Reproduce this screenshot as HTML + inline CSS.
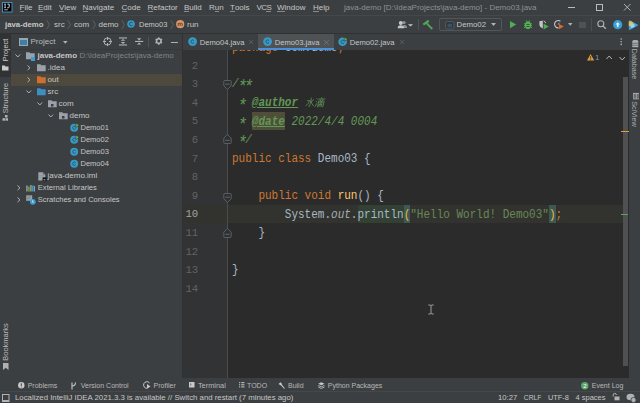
<!DOCTYPE html>
<html><head><meta charset="utf-8">
<style>
*{margin:0;padding:0;box-sizing:border-box}
html,body{width:640px;height:403px;overflow:hidden;background:#3C3F41}
body{position:relative;font-family:"Liberation Sans",sans-serif;color:#C6C6C6;font-size:8px}
.a{position:absolute;white-space:nowrap}
.t{position:absolute;white-space:nowrap;line-height:10px}
.mono{font-family:"Liberation Mono",monospace}
u{text-decoration:none;border-bottom:1px solid rgba(200,200,200,0.55);display:inline-block;line-height:7.4px}
svg{position:absolute;overflow:visible}
</style></head><body>

<!-- MENU BAR -->
<div class="a" style="left:0;top:0;width:640px;height:15px;background:#3C3F41"></div>
<div class="a" style="left:0;top:15px;width:640px;height:1px;background:#45484A"></div>
<!-- logo -->
<svg style="left:2px;top:2px" width="11" height="11"><rect x="0.5" y="0.5" width="9.5" height="9.5" fill="#000" stroke="#3D8FC6" stroke-width="1"/><path d="M2.3 2.1H3.9M3.1 2.1V5.7M2.3 5.7H3.9" stroke="#D8D8D8" stroke-width="0.9"/><path d="M5.4 2.1H7.2V4.9Q7.2 5.8 6.3 5.8H5.2" stroke="#D8D8D8" stroke-width="1" fill="none"/><rect x="2.2" y="7.3" width="3.6" height="1" fill="#BDB6A8"/></svg>
<div class="t" style="left:19.5px;top:3px"><u>F</u>ile</div>
<div class="t" style="left:38px;top:3px"><u>E</u>dit</div>
<div class="t" style="left:59px;top:3px"><u>V</u>iew</div>
<div class="t" style="left:82.5px;top:3px"><u>N</u>avigate</div>
<div class="t" style="left:121.5px;top:3px"><u>C</u>ode</div>
<div class="t" style="left:147.5px;top:3px"><u>R</u>efactor</div>
<div class="t" style="left:184px;top:3px"><u>B</u>uild</div>
<div class="t" style="left:209px;top:3px">R<u>u</u>n</div>
<div class="t" style="left:230px;top:3px"><u>T</u>ools</div>
<div class="t" style="left:256.5px;top:3px;letter-spacing:-0.6px">VC<u>S</u></div>
<div class="t" style="left:277px;top:3px"><u>W</u>indow</div>
<div class="t" style="left:313px;top:3px"><u>H</u>elp</div>
<div class="t" style="left:344px;top:3px;color:#8E9193">java-demo [D:\IdeaProjects\java-demo] - Demo03.java</div>
<!-- window controls -->
<div class="a" style="left:567.5px;top:7px;width:7px;height:1px;background:#BBB"></div>
<div class="a" style="left:596px;top:4px;width:6.5px;height:6.5px;border:1px solid #BBB"></div>
<svg style="left:624px;top:4px" width="7" height="7"><path d="M0 0L6.5 6.5M6.5 0L0 6.5" stroke="#BBB" stroke-width="0.9"/></svg>

<!-- BREADCRUMB BAR -->
<div class="t" style="left:5px;top:19.5px;font-weight:bold;font-size:7.8px">java-demo</div>
<svg style="left:46.2px;top:20px" width="5" height="10"><path d="M0.8 0.4Q2.6 2.6 3.3 4.6Q2.6 6.6 0.8 8.8" stroke="#6A6D70" fill="none" stroke-width="0.75"/></svg>
<div class="t" style="left:54px;top:19.5px">src</div>
<svg style="left:66.6px;top:20px" width="5" height="10"><path d="M0.8 0.4Q2.6 2.6 3.3 4.6Q2.6 6.6 0.8 8.8" stroke="#6A6D70" fill="none" stroke-width="0.75"/></svg>
<div class="t" style="left:74px;top:19.5px">com</div>
<svg style="left:91.6px;top:20px" width="5" height="10"><path d="M0.8 0.4Q2.6 2.6 3.3 4.6Q2.6 6.6 0.8 8.8" stroke="#6A6D70" fill="none" stroke-width="0.75"/></svg>
<div class="t" style="left:98.5px;top:19.5px">demo</div>
<svg style="left:121.4px;top:20px" width="5" height="10"><path d="M0.8 0.4Q2.6 2.6 3.3 4.6Q2.6 6.6 0.8 8.8" stroke="#6A6D70" fill="none" stroke-width="0.75"/></svg>
<svg style="left:126.5px;top:20.2px" width="8" height="8"><circle cx="4" cy="4" r="3.8" fill="#3A99C2"/><path d="M5.6 2.8A1.8 1.8 0 1 0 5.6 5.2" stroke="#1E4E6C" stroke-width="1" fill="none"/></svg>
<div class="t" style="left:139px;top:19.5px;font-size:7.5px">Demo03</div>
<svg style="left:170.3px;top:20px" width="5" height="10"><path d="M0.8 0.4Q2.6 2.6 3.3 4.6Q2.6 6.6 0.8 8.8" stroke="#6A6D70" fill="none" stroke-width="0.75"/></svg>
<svg style="left:176px;top:20.2px" width="8.5" height="8.5"><circle cx="4.2" cy="4.2" r="4.1" fill="#D4976C"/><path d="M2.2 6V3.2M2.2 3.8Q3.2 2.6 4.2 3.6V6M4.2 3.8Q5.2 2.6 6.2 3.6V6" stroke="#5A3522" stroke-width="0.8" fill="none"/></svg>
<div class="t" style="left:187px;top:19.5px">run</div>

<!-- right toolbar -->
<svg style="left:397px;top:20px" width="17" height="10"><circle cx="7" cy="2.6" r="1.7" fill="#8E9092"/><path d="M5 8Q5.5 5 7.5 5Q10 5 10 8Z" fill="#8E9092"/><circle cx="3.8" cy="3" r="2" fill="#C4C6C8"/><path d="M0.6 8.2Q0.6 5.2 3.8 5.2Q7 5.2 7 8.2Z" fill="#C4C6C8"/><path d="M11 4.2H16L13.5 6.6Z" fill="#C4C6C8"/></svg>
<div class="a" style="left:418px;top:19px;width:1px;height:11px;background:#505355"></div>
<svg style="left:421.5px;top:19.5px" width="12" height="11"><path d="M1.3 4.6L6.8 0.8" stroke="#4FA35B" stroke-width="2.3"/><path d="M4.2 2.8L10.3 9" stroke="#4FA35B" stroke-width="1.9"/></svg>
<div class="a" style="left:439px;top:18px;width:62.5px;height:13px;border:1px solid #54575A;border-radius:2px"></div>
<svg style="left:444.5px;top:20.5px" width="10" height="9"><rect x="0.5" y="0.5" width="8.5" height="7.5" rx="1.8" fill="#33373A" stroke="#55595C" stroke-width="1"/><rect x="2.5" y="2.8" width="4.5" height="3.5" fill="#34546E"/></svg>
<div class="t" style="left:456.5px;top:19.5px;font-size:7.8px">Demo02</div>
<svg style="left:491px;top:22.5px" width="6" height="4"><path d="M0 0L5 0L2.5 3Z" fill="#AFB1B3"/></svg>
<svg style="left:510px;top:21px" width="7" height="8"><path d="M0 0L6.2 3.6L0 7.2Z" fill="#4FAE55"/></svg>
<svg style="left:524px;top:20px" width="9" height="10"><path d="M2.3 0.3L3.2 1.8M5.7 0.3L4.8 1.8" stroke="#55B556" stroke-width="0.9"/><ellipse cx="4" cy="5.3" rx="3.1" ry="3.7" fill="#55B556"/><path d="M0 3.6L1.2 4.2M8 3.6L6.8 4.2M0 5.6H1.2M8 5.6H6.8M0 7.8L1.2 7.2M8 7.8L6.8 7.2" stroke="#55B556" stroke-width="0.9"/><rect x="2.4" y="3.9" width="3.2" height="0.9" fill="#2F4A33"/><rect x="2.4" y="6.1" width="3.2" height="0.9" fill="#2F4A33"/></svg>
<svg style="left:539px;top:20px" width="11" height="10"><path d="M0.4 1.2Q2 0.6 3.8 0.8V8.4Q1 8 0.4 5Z" fill="#C4C6C8"/><path d="M4.6 0.9Q6.4 1.3 6.6 3.2" stroke="#C4C6C8" stroke-width="0.9" fill="none"/><path d="M4.6 3.8L9.8 6.6L4.6 9.4Z" fill="#4FAE55"/></svg>
<svg style="left:553.5px;top:20px" width="11" height="10"><path d="M6.4 1.2A3.7 3.7 0 1 0 4.6 7.9" stroke="#C4C6C8" stroke-width="1.1" fill="none"/><path d="M4.2 4.6L5.2 2.8" stroke="#C4C6C8" stroke-width="0.8"/><path d="M5 3.9L9.8 6.6L5 9.3Z" fill="#E0662E"/></svg>
<svg style="left:567.5px;top:23px" width="5" height="4"><path d="M0 0L4.5 0L2.25 2.7Z" fill="#AFB1B3"/></svg>
<div class="a" style="left:579px;top:21.5px;width:6.5px;height:6.5px;background:#4F5254"></div>
<div class="a" style="left:591px;top:18px;width:1px;height:13px;background:#4C4F51"></div>
<svg style="left:597px;top:20px" width="10" height="10"><circle cx="3.8" cy="3.8" r="3" stroke="#AFB1B3" fill="none" stroke-width="1.1"/><path d="M6 6L8.8 8.8" stroke="#AFB1B3" stroke-width="1.3"/></svg>
<svg style="left:612.5px;top:19.8px" width="10" height="10"><circle cx="4.7" cy="4.7" r="4.6" fill="#389FD6"/><path d="M4.7 2.2L7 4.6H5.5V7H3.9V4.6H2.4Z" fill="#E8F2FA"/></svg>
<svg style="left:627.5px;top:19.5px" width="12" height="11"><path d="M0.8 1.8Q0.8 0.4 2.2 0.8L9.6 4.6Q10.6 5.2 9.6 5.8L2.2 9.8Q0.8 10.4 0.8 8.8Z" fill="#3AA2DD"/><path d="M0.8 1.8Q0.8 0.4 2.2 0.8L5.2 2.4L4 6.2L0.8 6Z" fill="#E2C15A"/><path d="M0.8 0.9L2.4 0.8L1.6 2.2Z" fill="#4FB86A"/><path d="M2.4 4.4L6.2 3.6L6.8 6.8L3.2 8.2Z" fill="#9FD3E6"/><path d="M6.8 6.8L9.6 5.8L2.2 9.8Z" fill="#2A7FC0"/></svg>

<!-- divider under breadcrumb -->
<div class="a" style="left:0;top:33px;width:640px;height:1px;background:#2F3133"></div>

<!-- LEFT STRIPE -->
<div class="a" style="left:0;top:34px;width:11px;height:43px;background:#303234"></div>
<div class="t" style="left:0;top:34px;width:11px;height:39px"><div style="position:absolute;left:5.5px;top:15.8px;transform:translate(-50%,-50%) rotate(-90deg);font-size:7.2px;line-height:8px;color:#CFCFCF">Project</div></div>
<svg style="left:2px;top:65px" width="7" height="6"><path d="M0 0.5H2.8L3.5 1.5H6.5V5.5H0Z" fill="#C8C8C8"/></svg>
<div class="t" style="left:0;top:80px;width:11px;height:34px"><div style="position:absolute;left:5.5px;top:17.5px;transform:translate(-50%,-50%) rotate(-90deg);font-size:7.5px;line-height:8px;color:#BBBBBB">Structure</div></div>
<svg style="left:2px;top:115px" width="7" height="6"><rect x="3" y="0" width="2.5" height="2.5" fill="#AFB1B3"/><rect x="0.5" y="3.2" width="2.5" height="2.5" fill="#AFB1B3"/><rect x="3.5" y="3.2" width="2.5" height="2.5" fill="#AFB1B3"/></svg>
<div class="t" style="left:0;top:322px;width:11px;height:40px"><div style="position:absolute;left:5.5px;top:20px;transform:translate(-50%,-50%) rotate(-90deg);font-size:7.5px;line-height:8px;color:#BBBBBB">Bookmarks</div></div>
<svg style="left:2.5px;top:362.5px" width="6" height="7"><path d="M0 0H5.5V7L2.75 4.8L0 7Z" fill="#AFB1B3"/></svg>

<!-- PROJECT PANEL HEADER -->
<svg style="left:19px;top:38px" width="9" height="8"><rect x="0.5" y="0.5" width="8" height="7" fill="#3C7FA8" stroke="#9AA7B0" stroke-width="1"/><rect x="0.5" y="0.5" width="8" height="1.5" fill="#9AA7B0"/></svg>
<div class="t" style="left:30.5px;top:37px;font-size:8px;color:#BBBBBB">Project</div>
<svg style="left:62.5px;top:40.5px" width="5" height="4"><path d="M0 0L4.6 0L2.3 2.8Z" fill="#AFB1B3"/></svg>
<svg style="left:103px;top:37px" width="9" height="9"><circle cx="4.5" cy="4.5" r="3.6" stroke="#AFB1B3" fill="none" stroke-width="1"/><path d="M4.5 0V3M4.5 6V9M0 4.5H3M6 4.5H9" stroke="#AFB1B3" stroke-width="1"/></svg>
<svg style="left:119px;top:37px" width="9" height="9"><rect x="0" y="0.4" width="8" height="1.1" fill="#AFB1B3"/><path d="M4 2L6.2 3.8H1.8Z" fill="#AFB1B3"/><path d="M4 6.9L6.2 5.1H1.8Z" fill="#AFB1B3"/><rect x="0" y="7.4" width="8" height="1.1" fill="#AFB1B3"/></svg>
<svg style="left:134.8px;top:37px" width="9" height="9"><path d="M4.1 3.5L6.2 1.3H2Z" fill="#AFB1B3"/><rect x="0" y="3.9" width="8.2" height="1.1" fill="#AFB1B3"/><path d="M4.1 5.4L6.2 7.6H2Z" fill="#AFB1B3"/></svg>
<div class="a" style="left:148px;top:37px;width:1px;height:10px;background:#515456"></div>
<svg style="left:154.7px;top:37.2px" width="8" height="9"><path d="M3.80 0.00L2.35 1.59L0.25 2.05L0.90 4.10L0.25 6.15L2.35 6.61L3.80 8.20L5.25 6.61L7.35 6.15L6.70 4.10L7.35 2.05L5.25 1.59Z M3.8 2.6A1.5 1.5 0 1 0 3.8 5.6A1.5 1.5 0 1 0 3.8 2.6Z" fill="#AFB1B3" fill-rule="evenodd"/></svg>
<div class="a" style="left:170.5px;top:41.5px;width:7.5px;height:1px;background:#AFB1B3"></div>

<div class="a" style="left:11px;top:49px;width:171px;height:1px;background:#36393B"></div>
<!-- TREE -->
<div class="a" style="left:11px;top:74px;width:171px;height:12px;background:#4D493C"></div>
<!-- row 0 java-demo -->
<svg style="left:14.9px;top:53.5px" width="6" height="4"><path d="M0.5 0.5L2.8 3L5.1 0.5" stroke="#AEB0B2" fill="none" stroke-width="1"/></svg>
<svg style="left:26px;top:51.7px" width="10" height="9"><path d="M0 0.3H3.3L4.3 1.3H8.7V7.3H0Z" fill="#9AA1A8"/><rect x="5" y="5" width="4" height="4" fill="#389FD6"/></svg>
<div class="t" style="left:37.5px;top:50.5px;font-weight:bold;font-size:8px">java-demo</div>
<div class="t" style="left:79.5px;top:50.5px;color:#808284">D:\IdeaProjects\java-demo</div>
<!-- .idea -->
<svg style="left:27px;top:65px" width="4" height="6"><path d="M0.5 0.5L3 2.8L0.5 5.1" stroke="#AEB0B2" fill="none" stroke-width="1"/></svg>
<svg style="left:37px;top:63.7px" width="10" height="9"><path d="M0 0.3H3.3L4.3 1.3H8.7V7.3H0Z" fill="#9AA1A8"/></svg>
<div class="t" style="left:47.5px;top:62.5px">.idea</div>
<!-- out -->
<svg style="left:27px;top:77px" width="4" height="6"><path d="M0.5 0.5L3 2.8L0.5 5.1" stroke="#AEB0B2" fill="none" stroke-width="1"/></svg>
<svg style="left:37px;top:75.7px" width="10" height="9"><path d="M0 0.3H3.3L4.3 1.3H8.7V7.3H0Z" fill="#D06F30"/></svg>
<div class="t" style="left:47.5px;top:74.5px">out</div>
<!-- src -->
<svg style="left:25.9px;top:89.5px" width="6" height="4"><path d="M0.5 0.5L2.8 3L5.1 0.5" stroke="#AEB0B2" fill="none" stroke-width="1"/></svg>
<svg style="left:37px;top:87.7px" width="10" height="9"><path d="M0 0.3H3.3L4.3 1.3H8.7V7.3H0Z" fill="#3E8FC0"/></svg>
<div class="t" style="left:47.5px;top:86.5px">src</div>
<!-- com -->
<svg style="left:36.9px;top:101.5px" width="6" height="4"><path d="M0.5 0.5L2.8 3L5.1 0.5" stroke="#AEB0B2" fill="none" stroke-width="1"/></svg>
<svg style="left:48px;top:99.7px" width="10" height="9"><path d="M0 0.3H3.3L4.3 1.3H8.7V7.3H0Z" fill="#9AA1A8"/><rect x="3" y="4" width="2.5" height="2.5" fill="#3C3F41"/></svg>
<div class="t" style="left:58.5px;top:98.5px">com</div>
<!-- demo -->
<svg style="left:47.9px;top:113.5px" width="6" height="4"><path d="M0.5 0.5L2.8 3L5.1 0.5" stroke="#AEB0B2" fill="none" stroke-width="1"/></svg>
<svg style="left:58.5px;top:111.7px" width="10" height="9"><path d="M0 0.3H3.3L4.3 1.3H8.7V7.3H0Z" fill="#9AA1A8"/><rect x="3" y="4" width="2.5" height="2.5" fill="#3C3F41"/></svg>
<div class="t" style="left:69.5px;top:110.5px">demo</div>
<!-- classes -->
<svg style="left:70px;top:123px" width="9" height="9"><circle cx="4.2" cy="4.7" r="4" fill="#3A99C2"/><path d="M5.6 3.7A1.6 1.6 0 1 0 5.6 5.7" stroke="#1F5670" stroke-width="0.9" fill="none"/><path d="M5.6 -0.6L9.6 2.2L5.6 5Z" fill="#3C3F41"/><path d="M6.2 0.4L8.8 2.2L6.2 4Z" fill="#62B543"/></svg>
<div class="t" style="left:80.5px;top:122.5px;font-size:7.5px">Demo01</div>
<svg style="left:70px;top:135px" width="9" height="9"><circle cx="4.2" cy="4.7" r="4" fill="#3A99C2"/><path d="M5.6 3.7A1.6 1.6 0 1 0 5.6 5.7" stroke="#1F5670" stroke-width="0.9" fill="none"/><path d="M5.6 -0.6L9.6 2.2L5.6 5Z" fill="#3C3F41"/><path d="M6.2 0.4L8.8 2.2L6.2 4Z" fill="#62B543"/></svg>
<div class="t" style="left:80.5px;top:134.5px;font-size:7.5px">Demo02</div>
<svg style="left:70px;top:147px" width="9" height="9"><circle cx="4.2" cy="4.7" r="4" fill="#3A99C2"/><path d="M5.6 3.7A1.6 1.6 0 1 0 5.6 5.7" stroke="#1F5670" stroke-width="0.9" fill="none"/></svg>
<div class="t" style="left:80.5px;top:146.5px;font-size:7.5px">Demo03</div>
<svg style="left:70px;top:159px" width="9" height="9"><circle cx="4.2" cy="4.7" r="4" fill="#3A99C2"/><path d="M5.6 3.7A1.6 1.6 0 1 0 5.6 5.7" stroke="#1F5670" stroke-width="0.9" fill="none"/></svg>
<div class="t" style="left:80.5px;top:158.5px;font-size:7.5px">Demo04</div>
<!-- iml -->
<svg style="left:38px;top:171.5px" width="9" height="10"><path d="M0.3 0.3H4.8L7.3 2.8V8.6H0.3Z" fill="#9EA4AA"/><path d="M4.8 0.3V2.8H7.3" fill="#6E7378"/><path d="M1.3 3.5H6.3M1.3 5.2H6.3" stroke="#858B90" stroke-width="0.5"/><rect x="4.6" y="5.4" width="3.9" height="3.8" fill="#111"/><rect x="5.6" y="7.4" width="1.8" height="0.9" fill="#ddd"/></svg>
<div class="t" style="left:47.5px;top:170.5px">java-demo.iml</div>
<!-- ext libs -->
<svg style="left:16.5px;top:185px" width="4" height="6"><path d="M0.5 0.5L3 2.8L0.5 5.1" stroke="#AEB0B2" fill="none" stroke-width="1"/></svg>
<svg style="left:26px;top:184.5px" width="10" height="7"><rect x="0.2" y="0.5" width="1.4" height="6" fill="#9AA1A8"/><rect x="2.2" y="1.5" width="1.4" height="5" fill="#62B543"/><rect x="4.2" y="0" width="1.4" height="6.5" fill="#9AA1A8"/><rect x="6.2" y="0.5" width="1.3" height="6" fill="#40A6E0"/><rect x="7.9" y="1" width="1.1" height="5.5" fill="#9AA1A8"/></svg>
<div class="t" style="left:37.8px;top:182.5px;font-size:7.6px">External Libraries</div>
<!-- scratches -->
<svg style="left:16.5px;top:197px" width="4" height="6"><path d="M0.5 0.5L3 2.8L0.5 5.1" stroke="#AEB0B2" fill="none" stroke-width="1"/></svg>
<svg style="left:26px;top:194.5px" width="10" height="10"><rect x="0.2" y="0.3" width="6" height="5.5" fill="#9AA1A8"/><path d="M1 2H5M1 3.6H4" stroke="#6E7378" stroke-width="0.6"/><circle cx="6.8" cy="6.8" r="2.9" fill="#389FD6"/><path d="M6.6 5.2V7.2H8" stroke="#E8F4FB" stroke-width="0.7" fill="none"/></svg>
<div class="t" style="left:37.8px;top:194.5px;font-size:7.55px">Scratches and Consoles</div>

<!-- panel vertical divider -->
<div class="a" style="left:182px;top:34px;width:1px;height:344px;background:#2F3133"></div>

<!-- EDITOR TABS -->
<div class="a" style="left:257.5px;top:34px;width:76px;height:16px;background:#4E5254"></div>
<div class="a" style="left:257.5px;top:48px;width:76px;height:2px;background:#4A8FD9"></div>
<svg style="left:187.5px;top:37px" width="10" height="10"><circle cx="4.6" cy="4.6" r="4.4" fill="#3A99C2"/><path d="M6.1 3.6A1.7 1.7 0 1 0 6.1 5.6" stroke="#1F5670" stroke-width="0.9" fill="none"/></svg>
<div class="t" style="left:199.8px;top:37.5px;font-size:7.6px">Demo04.java</div>
<svg style="left:249.3px;top:40px" width="5" height="5"><path d="M0 0L4.2 4.2M4.2 0L0 4.2" stroke="#5E6163" stroke-width="0.8"/></svg>
<svg style="left:262.8px;top:37px" width="10" height="10"><circle cx="4.6" cy="4.6" r="4.4" fill="#3A99C2"/><path d="M6.1 3.6A1.7 1.7 0 1 0 6.1 5.6" stroke="#1F5670" stroke-width="0.9" fill="none"/></svg>
<div class="t" style="left:274.8px;top:37.5px;font-size:7.6px">Demo03.java</div>
<svg style="left:324px;top:39.5px" width="5" height="5"><path d="M0 0L4.8 4.8M4.8 0L0 4.8" stroke="#74777A" stroke-width="0.8"/></svg>
<svg style="left:338px;top:37px" width="10" height="10"><circle cx="4.6" cy="4.8" r="4.3" fill="#3A99C2"/><path d="M6.1 3.8A1.7 1.7 0 1 0 6.1 5.8" stroke="#1F5670" stroke-width="0.9" fill="none"/><path d="M5.9 -0.6L9.9 2.2L5.9 5Z" fill="#3C3F41"/><path d="M6.5 0.4L9.1 2.2L6.5 4Z" fill="#62B543"/></svg>
<div class="t" style="left:349.8px;top:37.5px;font-size:7.6px">Demo02.java</div>
<svg style="left:399.8px;top:40px" width="5" height="5"><path d="M0 0L4.2 4.2M4.2 0L0 4.2" stroke="#5E6163" stroke-width="0.8"/></svg>
<svg style="left:620px;top:38px" width="3" height="8"><circle cx="1.2" cy="1" r="0.8" fill="#AFB1B3"/><circle cx="1.2" cy="3.7" r="0.8" fill="#AFB1B3"/><circle cx="1.2" cy="6.4" r="0.8" fill="#AFB1B3"/></svg>

<!-- EDITOR -->
<div class="a" style="left:183px;top:50px;width:44px;height:328px;background:#313335"></div>
<div class="a" style="left:227px;top:50px;width:1px;height:328px;background:#4A4C4E"></div>
<div class="a" style="left:228px;top:50px;width:395px;height:328px;background:#2B2B2B"></div>
<!-- current line -->
<div class="a" style="left:252px;top:112px;width:33px;height:18px;background:#4F4E39"></div>
<div class="a" style="left:183px;top:205px;width:440px;height:18px;background:#32332E"></div>
<div class="a" style="left:227px;top:205px;width:1px;height:18px;background:#4A4C4E"></div>
<div class="a" style="left:357.6px;top:205px;width:46.2px;height:18px;background:#334134"></div><div class="a" style="left:403.8px;top:205px;width:6.6px;height:18px;background:#3D5954"></div><div class="a" style="left:549px;top:205px;width:6.6px;height:18px;background:#3D5954"></div>
<!-- fold markers placed after code -->
<!-- scrollbar & right stripe -->
<div class="a" style="left:623px;top:50px;width:6px;height:328px;background:#2B2B2B"></div>
<div class="a" style="left:623px;top:77px;width:5.3px;height:289px;background:#4E5052"></div>
<div class="a" style="left:620.5px;top:131px;width:8px;height:1px;background:#E0A030"></div>
<div class="a" style="left:621px;top:213.5px;width:7px;height:1px;background:#5FA15A"></div>
<div class="a" style="left:629px;top:34px;width:11px;height:344px;background:#3C3F41"></div>

<!-- warning / nav -->
<svg style="left:586.5px;top:54px" width="8" height="7"><path d="M3.6 0L7.2 6.6H0Z" fill="#D99E3C"/><path d="M3.6 2.2V4.6M3.6 5.2V5.9" stroke="#3A2A10" stroke-width="0.8"/></svg>
<div class="t" style="left:595px;top:52.5px;font-size:8px;color:#7C93A8">1</div>
<svg style="left:605.5px;top:55px" width="7" height="5"><path d="M0.5 4L3.2 1L5.9 4" stroke="#B4B6B8" stroke-width="1" fill="none"/></svg>
<svg style="left:618.5px;top:55.5px" width="7" height="5"><path d="M0.5 1L3.2 4L5.9 1" stroke="#B4B6B8" stroke-width="1" fill="none"/></svg>

<!-- right stripe labels -->
<svg style="left:632px;top:39.5px" width="7" height="8"><ellipse cx="3.3" cy="1.2" rx="3" ry="1.1" fill="#AFB1B3"/><rect x="0.3" y="1.2" width="6" height="6" fill="#AFB1B3"/><path d="M0.3 3.2H6.3M0.3 5.2H6.3" stroke="#3C3F41" stroke-width="0.6"/></svg>
<div class="t" style="left:628px;top:50px;width:12px;height:30px"><div style="position:absolute;left:6px;top:14.4px;transform:translate(-50%,-50%) rotate(90deg);font-size:7.1px;line-height:8px;color:#B0B0B0">Database</div></div>
<svg style="left:632.5px;top:92.5px" width="7" height="7"><path d="M0.5 0V5.5M2 0V5.5M3.5 0V5.5M5 0V5.5" stroke="#AFB1B3" stroke-width="0.8"/><path d="M0 0.4H6M0 5.9H6" stroke="#AFB1B3" stroke-width="0.9"/></svg>
<div class="t" style="left:628px;top:101px;width:12px;height:25px"><div style="position:absolute;left:6px;top:12.5px;transform:translate(-50%,-50%) rotate(90deg);font-size:7.2px;line-height:8px;color:#B0B0B0">SciView</div></div>

<!-- CODE -->
<div class="a mono" style="left:228px;top:50px;width:395px;height:328px;overflow:hidden;font-size:12.5px;line-height:18.6px;color:#A9B7C6">
<div class="a" style="left:4.2px;top:-10.7px;transform:scaleX(0.88);transform-origin:0 0;white-space:pre"><span style="color:#CC7832">package</span> com.demo<span style="color:#CC7832">;</span></div>
<div class="a" style="left:4.2px;top:25.3px;transform:scaleX(0.88);transform-origin:0 0;white-space:pre"><span style="color:#629755;font-style:italic">/<span style="display:inline-block;transform:translateY(3.4px) scale(1.45)">*</span><span style="display:inline-block;transform:translateY(3.4px) scale(1.45)">*</span></span></div>
<div class="a" style="left:4.2px;top:43.9px;transform:scaleX(0.88);transform-origin:0 0;white-space:pre"><span style="color:#629755;font-style:italic"> <span style="display:inline-block;transform:translateY(3.4px) scale(1.45)">*</span> <b style="text-decoration:underline">@author</b> <svg style="position:relative;display:inline-block;vertical-align:baseline;overflow:visible;top:2.4px" width="26" height="11" viewBox="0 0 26 11"><g transform="translate(2.6,0.6) scale(0.95) skewX(-14)" stroke="#629755" stroke-width="0.8" fill="none" stroke-linecap="round"><path d="M5 0.5V9.2Q5 9.9 4 9.4"/><path d="M1 3.2H3.6Q3 6.5 0.5 8.6"/><path d="M8.2 2.2L6.2 4.2"/><path d="M5.3 3.6Q6.6 6.6 9.6 8.9"/><g transform="translate(11,0)"><path d="M0.8 1L1.8 1.8M0.4 3.8L1.4 4.6M0.6 9.2L1.9 6.2"/><path d="M6.5 0.1V1.3M3 1.5H10.5"/><path d="M5 2.3L5.6 3.3M8.4 2.3L7.8 3.3"/><path d="M3.6 3.8V9.8M3.6 3.8H10V9.3Q10 9.8 9.3 9.8"/><path d="M5 5.5H8.5M6.75 4.2V7M5.2 7.2H8.3V9H5.2Z"/></g></g></svg></span></div>
<div class="a" style="left:4.2px;top:62.5px;transform:scaleX(0.88);transform-origin:0 0;white-space:pre"><span style="color:#629755;font-style:italic"> <span style="display:inline-block;transform:translateY(3.4px) scale(1.45)">*</span> <b style="text-decoration:underline">@date</b> 2022/4/4 0004</span></div>
<div class="a" style="left:4.2px;top:81.1px;transform:scaleX(0.88);transform-origin:0 0;white-space:pre"><span style="color:#629755;font-style:italic"> <span style="display:inline-block;transform:translateY(3.4px) scale(1.45)">*</span>/</span></div>
<div class="a" style="left:4.2px;top:99.7px;transform:scaleX(0.88);transform-origin:0 0;white-space:pre"><span style="color:#CC7832">public class </span>Demo03 {</div>
<div class="a" style="left:4.2px;top:136.9px;transform:scaleX(0.88);transform-origin:0 0;white-space:pre">    <span style="color:#CC7832">public void </span><span style="color:#FFC66D">run</span>() {</div>
<div class="a" style="left:4.2px;top:155.5px;transform:scaleX(0.88);transform-origin:0 0;white-space:pre">        System.<span style="color:#A3ABB8;font-style:italic">out</span>.println<span style="color:#E8BA36">(</span><span style="color:#6A8759">"Hello World! Demo03"</span><span style="color:#E8BA36">)</span><span style="color:#CC7832">;</span></div>
<div class="a" style="left:4.2px;top:174.1px;transform:scaleX(0.88);transform-origin:0 0;white-space:pre">    }</div>
<div class="a" style="left:4.2px;top:211.3px;transform:scaleX(0.88);transform-origin:0 0;white-space:pre">}</div>
</div>
<div class="a mono" style="left:183px;top:50px;width:44px;height:328px;overflow:hidden;font-size:11.8px;line-height:18.6px;color:#606366">
<div class="a" style="right:28.6px;top:-12.0px;transform:scaleX(0.9);transform-origin:100% 50%;color:#606366">1</div>
<div class="a" style="right:28.6px;top:6.6px;transform:scaleX(0.9);transform-origin:100% 50%;color:#606366">2</div>
<div class="a" style="right:28.6px;top:25.2px;transform:scaleX(0.9);transform-origin:100% 50%;color:#606366">3</div>
<div class="a" style="right:28.6px;top:43.8px;transform:scaleX(0.9);transform-origin:100% 50%;color:#606366">4</div>
<div class="a" style="right:28.6px;top:62.4px;transform:scaleX(0.9);transform-origin:100% 50%;color:#606366">5</div>
<div class="a" style="right:28.6px;top:81.0px;transform:scaleX(0.9);transform-origin:100% 50%;color:#606366">6</div>
<div class="a" style="right:28.6px;top:99.6px;transform:scaleX(0.9);transform-origin:100% 50%;color:#606366">7</div>
<div class="a" style="right:28.6px;top:118.2px;transform:scaleX(0.9);transform-origin:100% 50%;color:#606366">8</div>
<div class="a" style="right:28.6px;top:136.8px;transform:scaleX(0.9);transform-origin:100% 50%;color:#606366">9</div>
<div class="a" style="right:28.6px;top:155.4px;transform:scaleX(0.9);transform-origin:100% 50%;color:#A4A3A3">10</div>
<div class="a" style="right:28.6px;top:174.0px;transform:scaleX(0.9);transform-origin:100% 50%;color:#606366">11</div>
<div class="a" style="right:28.6px;top:192.6px;transform:scaleX(0.9);transform-origin:100% 50%;color:#606366">12</div>
<div class="a" style="right:28.6px;top:211.2px;transform:scaleX(0.9);transform-origin:100% 50%;color:#606366">13</div>
<div class="a" style="right:28.6px;top:229.8px;transform:scaleX(0.9);transform-origin:100% 50%;color:#606366">14</div>
</div>

<svg style="left:223px;top:80px" width="10" height="10"><path d="M0.8 1.2Q0.8 0.5 1.5 0.5H7.5Q8.2 0.5 8.2 1.2V5.8L4.5 9.5L0.8 5.8Z" fill="#2F3032" stroke="#606366" stroke-width="0.9"/><path d="M2.3 4.2H6.7" stroke="#6E7174" stroke-width="0.8"/></svg><svg style="left:223px;top:134px" width="10" height="10"><path d="M0.8 8.8Q0.8 9.5 1.5 9.5H7.5Q8.2 9.5 8.2 8.8V4.2L4.5 0.3L0.8 4.2Z" fill="#2F3032" stroke="#606366" stroke-width="0.9"/><path d="M2.3 6.3H6.7" stroke="#6E7174" stroke-width="0.8"/></svg><svg style="left:223px;top:192.5px" width="10" height="10"><path d="M0.8 1.2Q0.8 0.5 1.5 0.5H7.5Q8.2 0.5 8.2 1.2V5.8L4.5 9.5L0.8 5.8Z" fill="#2F3032" stroke="#606366" stroke-width="0.9"/><path d="M2.3 4.2H6.7" stroke="#6E7174" stroke-width="0.8"/></svg><svg style="left:223px;top:227.5px" width="10" height="10"><path d="M0.8 8.8Q0.8 9.5 1.5 9.5H7.5Q8.2 9.5 8.2 8.8V4.2L4.5 0.3L0.8 4.2Z" fill="#2F3032" stroke="#606366" stroke-width="0.9"/><path d="M2.3 6.3H6.7" stroke="#6E7174" stroke-width="0.8"/></svg>
<svg style="left:427.5px;top:303.5px" width="7" height="11"><path d="M0.3 1H2Q2.8 1 3 1.6Q3.2 1 4 1H5.7M3 1.6V9.4M0.3 10H2Q2.8 10 3 9.4Q3.2 10 4 10H5.7" stroke="#1E1E1E" stroke-width="1.8" fill="none"/><path d="M0.3 1H2Q2.8 1 3 1.6Q3.2 1 4 1H5.7M3 1.6V9.4M0.3 10H2Q2.8 10 3 9.4Q3.2 10 4 10H5.7" stroke="#B7BFB7" stroke-width="0.9" fill="none"/></svg>
<!-- BOTTOM TOOLBAR -->
<div class="a" style="left:0;top:378px;width:640px;height:14px;background:#3C3F41"></div>
<div class="a" style="left:0;top:391px;width:640px;height:1px;background:#45484A"></div>
<svg style="left:18px;top:382px" width="7" height="7"><circle cx="3.3" cy="3.3" r="3.2" fill="#C9C9C9"/><path d="M3.3 1.3V3.8M3.3 4.6V5.4" stroke="#3C3F41" stroke-width="1"/></svg>
<div class="t" style="left:27.7px;top:380.5px;font-size:7px;color:#B8B8B8">Problems</div>
<svg style="left:71px;top:381.5px" width="6" height="8"><path d="M1 0.5V7.5M1 4Q4.5 4 4.5 0.5" stroke="#C9C9C9" stroke-width="1.1" fill="none"/></svg>
<div class="t" style="left:80.8px;top:380.5px;font-size:7px;color:#B8B8B8">Version Control</div>
<svg style="left:142.5px;top:381px" width="8" height="8"><path d="M6.5 2A3.3 3.3 0 1 0 4 7.3" stroke="#C9C9C9" stroke-width="1" fill="none"/><path d="M4 3L7.5 5.5L4 7.8Z" fill="#C9C9C9"/></svg>
<div class="t" style="left:153.6px;top:380.5px;font-size:7px;color:#B8B8B8">Profiler</div>
<svg style="left:188.5px;top:382px" width="6" height="6"><rect x="0" y="0" width="5.5" height="5.5" fill="#C9C9C9"/><path d="M1 1.5L2.3 2.5L1 3.5" stroke="#3C3F41" stroke-width="0.6" fill="none"/></svg>
<div class="t" style="left:197.9px;top:380.5px;font-size:7.4px;color:#B8B8B8">Terminal</div>
<svg style="left:238.5px;top:382px" width="6" height="6"><path d="M0 0.7H1.2M0 2.8H1.2M0 4.9H1.2M2.2 0.7H5.5M2.2 2.8H5.5M2.2 4.9H5.5" stroke="#C9C9C9" stroke-width="1"/></svg>
<div class="t" style="left:247px;top:380.5px;font-size:7px;color:#B8B8B8">TODO</div>
<svg style="left:278px;top:381.5px" width="7" height="7"><path d="M0.5 2L2.5 0.3L4.3 2.2L3 3.5Z" fill="#C9C9C9"/><path d="M3.3 2.8L6.5 6.5" stroke="#C9C9C9" stroke-width="1.1"/></svg>
<div class="t" style="left:288px;top:380.5px;font-size:7px;color:#B8B8B8">Build</div>
<svg style="left:317.5px;top:381.5px" width="7" height="7"><path d="M3.3 0.3L6.5 1.8L3.3 3.3L0.2 1.8Z" fill="#C9C9C9"/><path d="M0.2 3.4L3.3 4.9L6.5 3.4M0.2 5L3.3 6.5L6.5 5" stroke="#C9C9C9" stroke-width="0.8" fill="none"/></svg>
<div class="t" style="left:327.8px;top:380.5px;font-size:7px;color:#B8B8B8">Python Packages</div>
<svg style="left:581px;top:382px" width="8" height="8"><circle cx="3.8" cy="3.8" r="3.7" fill="#59A869"/><text x="3.8" y="6.2" font-size="6" font-family="Liberation Sans" fill="#fff" text-anchor="middle">2</text></svg>
<div class="t" style="left:591.8px;top:380.5px;font-size:7px;color:#B8B8B8">Event Log</div>

<!-- STATUS BAR -->
<svg style="left:2px;top:393.5px" width="8" height="8"><rect x="0.5" y="0.5" width="6.5" height="6" fill="none" stroke="#AFB1B3" stroke-width="1"/><path d="M0 7.5H7.5" stroke="#AFB1B3" stroke-width="1"/></svg>
<div class="t" style="left:15px;top:392.5px;font-size:7.82px">Localized IntelliJ IDEA 2021.3.3 is available // Switch and restart (7 minutes ago)</div>
<div class="t" style="left:498px;top:392.5px;font-size:7.7px">10:27</div>
<div class="t" style="left:523.8px;top:392.5px;font-size:6.7px">CRLF</div>
<div class="t" style="left:548px;top:392.5px;font-size:7.4px">UTF-8</div>
<div class="t" style="left:575.5px;top:392.5px;font-size:7.5px">4 spaces</div>
<svg style="left:612px;top:393px" width="8" height="8"><path d="M1.2 3.5V2A1.6 1.6 0 0 1 4.4 2" stroke="#AFB1B3" stroke-width="1" fill="none"/><rect x="2.5" y="3.5" width="5" height="3.8" fill="#AFB1B3"/></svg>
<svg style="left:626px;top:392.5px" width="11" height="10"><ellipse cx="4.5" cy="4" rx="4" ry="3.3" fill="#AFB1B3"/><circle cx="7.5" cy="7" r="2.6" fill="#AFB1B3" stroke="#3C3F41" stroke-width="0.8"/></svg>

</body></html>
